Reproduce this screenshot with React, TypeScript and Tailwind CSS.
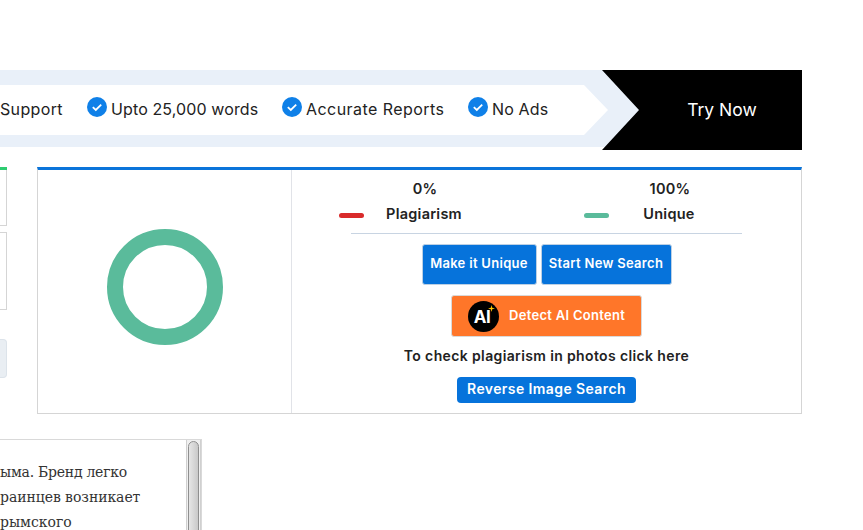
const sans = "font-['Inter','Liberation_Sans',sans-serif]";

const CheckBadge = () => (
  <svg viewBox="0 0 20 20" className="-mt-[4px] h-5 w-5 shrink-0">
    <circle cx="10" cy="10" r="10" fill="#0f80e8" />
    <path d="M5.8 10.2 L8.8 13 L14.2 7.6" fill="none" stroke="#fff" strokeWidth="1.8" />
  </svg>
);

const features = [
  { label: "Upto 25,000 words", width: "w-[171px]", tracking: "tracking-[0.12px]" },
  { label: "Accurate Reports", width: "w-[162px]", tracking: "tracking-[0.45px]" },
  { label: "No Ads", width: "w-[81px]", tracking: "tracking-[0.15px]" },
];

const Banner = () => (
  <div className="flex items-start">
    <div className="h-[77px] w-[640px] shrink-0 bg-[#e9f0f9] pt-[15px]">
      <div className="flex h-[50px] w-[608px] items-center bg-white pb-[2px] text-[16px] text-[#222] [clip-path:polygon(0_0,584px_0,608px_25px,584px_100%,0_100%)]">
        <span className="w-[87px] shrink-0 tracking-[0.35px]">Support</span>
        {features.map((f) => (
          <div key={f.label} className={`mr-[24px] flex shrink-0 items-center gap-[4px] last:mr-0 ${f.width}`}>
            <CheckBadge />
            <span className={`whitespace-nowrap ${f.tracking}`}>{f.label}</span>
          </div>
        ))}
      </div>
    </div>
    <div className="-ml-[38px] flex h-[80px] w-[200px] shrink-0 items-center justify-center bg-black pl-[40px] text-[17.5px] font-normal text-white [clip-path:polygon(0_0,100%_0,100%_100%,0_100%,37px_50%)]">
      Try Now
    </div>
  </div>
);

const LeftColumn = () => (
  <div className="w-[7px] shrink-0">
    <div className="h-[3px] bg-[#2ecc71]" />
    <div className="h-[56px] border-r border-b border-[#d5d5d5]" />
    <div className="mt-[6px] h-[78px] border-y border-r border-[#d5d5d5]" />
    <div className="mt-[29px] h-[39px] rounded-r-[4px] border-y border-r border-[#dce3ea] bg-[#e9eef3]" />
  </div>
);

const Stat = ({ value, label, color }: { value: string; label: string; color: string }) => (
  <div className="w-[245px] shrink-0">
    <div className="w-[172px] text-center text-[14.5px] leading-[20px] font-semibold tracking-[0.25px] text-[#222]">{value}</div>
    <div className="mt-[5px] flex w-[170px] items-center">
      <span className={`mt-[2px] h-[5px] w-[25px] shrink-0 rounded-full ${color}`} />
      <span className="flex-1 pr-[25px] text-center text-[14.5px] leading-[20px] font-semibold tracking-[0.25px] text-[#222]">{label}</span>
    </div>
  </div>
);

const ResultCard = () => (
  <div className="ml-[30px] flex h-[247px] w-[765px] shrink-0 border-x border-t-[3px] border-b border-x-[#d5d5d5] border-t-[#0a74da] border-b-[#d5d5d5]">
    <div className="flex w-[254px] shrink-0 items-center justify-center border-r border-[#e1e3e8] pb-[9px]">
      <div className="h-[116px] w-[116px] rounded-full border-[16px] border-[#5abb9b]" />
    </div>
    <div className="w-[509px] min-w-0 shrink-0 pt-[9px]">
      <div className="flex pl-[47px]">
        <Stat value="0%" label="Plagiarism" color="bg-[#d92b2b]" />
        <Stat value="100%" label="Unique" color="bg-[#5abb9b]" />
      </div>
      <div className="mx-auto mt-[9px] h-px w-[391px] bg-[#c8d4e2]" />
      <div className="mt-[10px] flex justify-center gap-[4px]">
        <button className="h-[41px] w-[115px] rounded-[3px] border border-[#bcd0e4] bg-[#0673db] pb-[2px] text-[13px] font-semibold tracking-[0.3px] whitespace-nowrap text-white">
          Make it Unique
        </button>
        <button className="h-[41px] w-[131px] rounded-[3px] border border-[#bcd0e4] bg-[#0673db] pb-[2px] text-[13px] font-semibold tracking-[0.3px] whitespace-nowrap text-white">
          Start New Search
        </button>
      </div>
      <div className="mt-[10px] flex justify-center">
        <button className="flex h-[42px] w-[191px] items-center rounded-[3px] border border-[#d9d9d9] bg-[#ff7629] pl-[16px] text-[13px] font-semibold tracking-[0.3px] text-white">
          <span className="relative flex h-[31px] w-[31px] shrink-0 items-center justify-center rounded-full bg-black pt-[2px] pr-[3px] text-[17px] leading-none font-bold tracking-[-0.5px] text-white">
            AI
            <svg viewBox="0 0 10 10" className="absolute top-[4px] right-[4px] h-[7px] w-[7px]">
              <path d="M5 0 L6 4 L10 5 L6 6 L5 10 L4 6 L0 5 L4 4 Z" fill="#ffc400" />
            </svg>
          </span>
          <span className="ml-[10px] whitespace-nowrap">Detect AI Content</span>
        </button>
      </div>
      <p className="mt-[9px] text-center text-[14px] leading-[20px] font-semibold tracking-[0.37px] text-[#222]">
        To check plagiarism in photos click here
      </p>
      <div className="mt-[11px] flex justify-center">
        <button className="h-[26px] w-[179px] rounded-[4px] bg-[#0673db] pb-[3px] text-[14px] font-semibold tracking-[0.4px] whitespace-nowrap text-white">
          Reverse Image Search
        </button>
      </div>
    </div>
  </div>
);

const TextBox = () => (
  <div className="mt-[25px] flex h-[120px] w-[202px] border-t border-r border-[#d9d9d9] bg-white">
    <div className="w-[186px] shrink-0 pt-[20px] font-['DejaVu_Serif',serif] text-[14px] leading-[25px] whitespace-nowrap text-[#333]">
      <div className="tracking-[-0.25px]">ыма. Бренд легко</div>
      <div className="tracking-[-0.06px]">раинцев возникает</div>
      <div>рымского</div>
    </div>
    <div className="w-[15px] shrink-0 border-x border-[#d0d0d0] bg-[#f0f0f0] px-[1px] pt-[1px]">
      <div className="h-[110px] rounded-t-[6px] border border-[#8f8f8f] bg-gradient-to-r from-[#e6e6e6] to-[#c9c9c9]" />
    </div>
  </div>
);

export default function App() {
  return (
    <div className={`h-[530px] w-[863px] overflow-hidden bg-white pt-[70px] ${sans}`}>
      <Banner />
      <div className="mt-[17px] flex items-start">
        <LeftColumn />
        <ResultCard />
      </div>
      <TextBox />
    </div>
  );
}
